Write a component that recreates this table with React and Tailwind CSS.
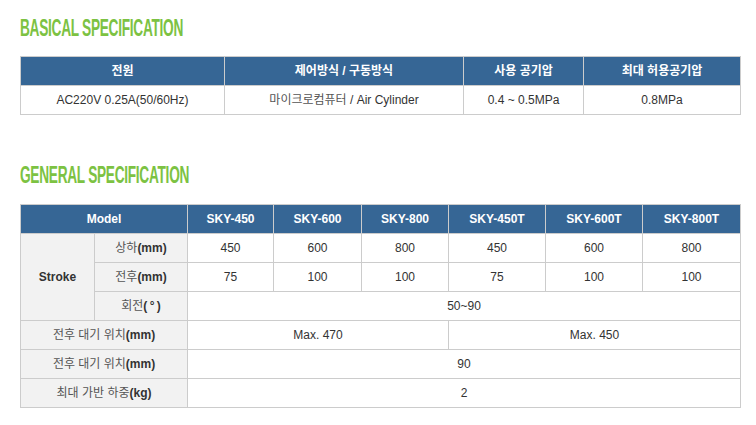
const FONT = "font-['Liberation_Sans','Noto_Sans_CJK_KR',sans-serif]";

const Title = ({ children }) => (
  <div className="h-[24px] leading-[24px] overflow-visible whitespace-nowrap">
    <span className="inline-block origin-left scale-x-[0.57] text-[24px] font-bold text-[#7cc242] font-['Liberation_Sans_Narrow','Liberation_Sans',sans-serif] tracking-[-0.5px]">
      {children}
    </span>
  </div>
);

const Th = ({ children, colSpan }) => (
  <th colSpan={colSpan} className="border border-[#cccccc] bg-[#366695] text-white font-bold text-[12px] text-center p-0">
    {children}
  </th>
);

const Td = ({ children, colSpan, rowSpan }) => (
  <td colSpan={colSpan} rowSpan={rowSpan} className="border border-[#cccccc] text-[12px] text-[#333] text-center p-0">
    {children}
  </td>
);

// gray label cell: korean text regular, units bold
const Label = ({ ko, unit, colSpan, rowSpan }) => (
  <td colSpan={colSpan} rowSpan={rowSpan} className="border border-[#cccccc] bg-[#f2f2f2] text-[12px] text-center p-0">
    <span className="text-[#555]">{ko}</span>
    <span className="font-bold text-[#333]">{unit}</span>
  </td>
);

export default function App() {
  const models = ['SKY-450', 'SKY-600', 'SKY-800', 'SKY-450T', 'SKY-600T', 'SKY-800T'];

  return (
    <div className={`w-[756px] h-[425px] bg-white px-[20px] pt-[16px] ${FONT}`}>
      <Title>BASICAL SPECIFICATION</Title>

      <table className="mt-[16px] w-[720px] table-fixed border-collapse">
        <colgroup>
          <col className="w-[204px]" />
          <col className="w-[239px]" />
          <col className="w-[120px]" />
          <col className="w-[157px]" />
        </colgroup>
        <thead>
          <tr className="h-[29px]">
            <Th>전원</Th>
            <Th>제어방식 / 구동방식</Th>
            <Th>사용 공기압</Th>
            <Th>최대 허용공기압</Th>
          </tr>
        </thead>
        <tbody>
          <tr className="h-[29px]">
            <Td>AC220V 0.25A(50/60Hz)</Td>
            <Td><span className="text-[#555]">마이크로컴퓨터</span> / Air Cylinder</Td>
            <Td>0.4 ~ 0.5MPa</Td>
            <Td>0.8MPa</Td>
          </tr>
        </tbody>
      </table>

      <div className="mt-[48px]">
        <Title>GENERAL SPECIFICATION</Title>
      </div>

      <table className="mt-[17px] w-[720px] table-fixed border-collapse">
        <colgroup>
          <col className="w-[74px]" />
          <col className="w-[93px]" />
          <col className="w-[86px]" />
          <col className="w-[88px]" />
          <col className="w-[87px]" />
          <col className="w-[97px]" />
          <col className="w-[97px]" />
          <col className="w-[98px]" />
        </colgroup>
        <thead>
          <tr className="h-[29px]">
            <Th colSpan={2}>Model</Th>
            {models.map((m) => (
              <Th key={m}>{m}</Th>
            ))}
          </tr>
        </thead>
        <tbody>
          <tr className="h-[29px]">
            <td rowSpan={3} className="border border-[#cccccc] bg-[#f2f2f2] text-[12px] font-bold text-[#333] text-center p-0">
              Stroke
            </td>
            <Label ko="상하" unit="(mm)" />
            {['450', '600', '800', '450', '600', '800'].map((v, i) => (
              <Td key={i}>{v}</Td>
            ))}
          </tr>
          <tr className="h-[29px]">
            <Label ko="전후" unit="(mm)" />
            {['75', '100', '100', '75', '100', '100'].map((v, i) => (
              <Td key={i}>{v}</Td>
            ))}
          </tr>
          <tr className="h-[29px]">
            <Label ko="회전" unit={'(\u2009°\u2009)'} />
            <Td colSpan={6}>50~90</Td>
          </tr>
          <tr className="h-[29px]">
            <Label colSpan={2} ko="전후 대기 위치" unit="(mm)" />
            <Td colSpan={3}>Max. 470</Td>
            <Td colSpan={3}>Max. 450</Td>
          </tr>
          <tr className="h-[29px]">
            <Label colSpan={2} ko="전후 대기 위치" unit="(mm)" />
            <Td colSpan={6}>90</Td>
          </tr>
          <tr className="h-[29px]">
            <Label colSpan={2} ko="최대 가반 하중" unit="(kg)" />
            <Td colSpan={6}>2</Td>
          </tr>
        </tbody>
      </table>
    </div>
  );
}
